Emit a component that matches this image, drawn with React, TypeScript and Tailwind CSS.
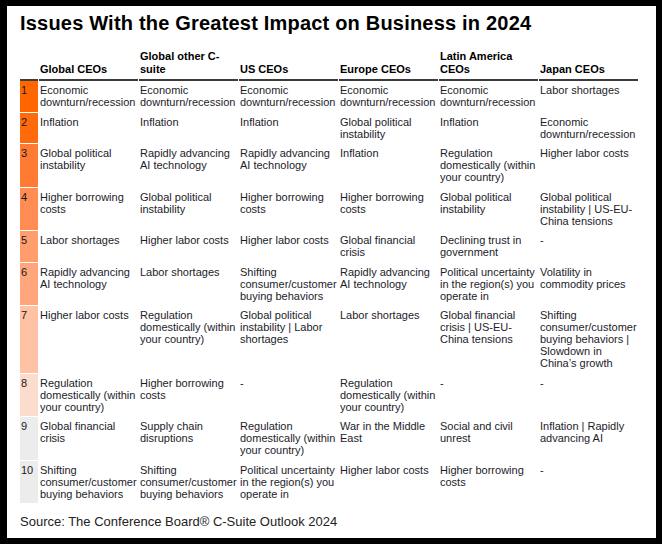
import React from "react";

const cols = [
  ["Global CEOs"],
  ["Global other C-", "suite"],
  ["US CEOs"],
  ["Europe CEOs"],
  ["Latin America", "CEOs"],
  ["Japan CEOs"],
];

const ED = ["Economic", "downturn/recession"];
const GPI = ["Global political", "instability"];
const RAA = ["Rapidly advancing", "AI technology"];
const HBC = ["Higher borrowing", "costs"];
const REG = ["Regulation", "domestically (within", "your country)"];
const SCB = ["Shifting", "consumer/customer", "buying behaviors"];
const PU = ["Political uncertainty", "in the region(s) you", "operate in"];

const rows: string[][][] = [
  [ED, ED, ED, ED, ED, ["Labor shortages"]],
  [["Inflation"], ["Inflation"], ["Inflation"], GPI, ["Inflation"], ED],
  [GPI, RAA, RAA, ["Inflation"], REG, ["Higher labor costs"]],
  [HBC, GPI, HBC, HBC, GPI, ["Global political", "instability | US-EU-", "China tensions"]],
  [
    ["Labor shortages"],
    ["Higher labor costs"],
    ["Higher labor costs"],
    ["Global financial", "crisis"],
    ["Declining trust in", "government"],
    ["-"],
  ],
  [RAA, ["Labor shortages"], SCB, RAA, PU, ["Volatility in", "commodity prices"]],
  [
    ["Higher labor costs"],
    REG,
    ["Global political", "instability | Labor", "shortages"],
    ["Labor shortages"],
    ["Global financial", "crisis | US-EU-", "China tensions"],
    ["Shifting", "consumer/customer", "buying behaviors |", "Slowdown in", "China\u2019s growth"],
  ],
  [REG, HBC, ["-"], REG, ["-"], ["-"]],
  [
    ["Global financial", "crisis"],
    ["Supply chain", "disruptions"],
    REG,
    ["War in the Middle", "East"],
    ["Social and civil", "unrest"],
    ["Inflation | Rapidly", "advancing AI"],
  ],
  [SCB, SCB, PU, ["Higher labor costs"], HBC, ["-"]],
];

const rankBg = [
  "bg-[#ff6600]",
  "bg-[#ff6a0c]",
  "bg-[#ff7a33]",
  "bg-[#ff8c52]",
  "bg-[#ff9d6c]",
  "bg-[#ffa67d]",
  "bg-[#ffc2a4]",
  "bg-[#fcdccd]",
  "bg-[#ececec]",
  "bg-[#ececec]",
];

function Lines({ lines }: { lines: string[] }) {
  return (
    <>
      {lines.map((l, i) => (
        <div key={i} className="whitespace-nowrap">
          {l}
        </div>
      ))}
    </>
  );
}

export default function App() {
  return (
    <div
      className="w-[662px] h-[544px] bg-black pl-[7px] pt-[6px] pr-[6px] pb-[6px]"
      style={{ fontFamily: '"Liberation Sans", Arial, sans-serif' }}
    >
      <div className="w-full h-full bg-white pl-[13px] pt-[5px]">
        <h1 className="text-[20px] leading-[24px] font-bold text-black tracking-[0.2px]">
          Issues With the Greatest Impact on Business in 2024
        </h1>

        <div className="mt-[15px] grid grid-cols-[18px_repeat(6,99px)] gap-x-px w-[618px]">
          <div className="border-b-2 border-[#3c3c3c]" />
          {cols.map((c, i) => (
            <div
              key={i}
              className="border-b-2 border-[#3c3c3c] pb-[3px] pl-px flex flex-col justify-end text-[11px] leading-[13px] font-bold text-black"
            >
              <Lines lines={c} />
            </div>
          ))}
        </div>

        <div className="grid grid-cols-[18px_repeat(6,99px)] gap-x-px gap-y-px w-[618px] text-[11px] leading-[12px] text-[#1c1c2a]">
          {rows.map((r, ri) => (
            <React.Fragment key={ri}>
              <div className={`${rankBg[ri]} pt-[3px] pb-[3.5px] pl-px text-[#1a1a1a]`}>
                {ri + 1}
              </div>
              {r.map((cell, ci) => (
                <div key={ci} className="pt-[3px] pb-[3.5px] pl-px">
                  <Lines lines={cell} />
                </div>
              ))}
            </React.Fragment>
          ))}
        </div>

        <p className="mt-[11px] text-[13px] leading-[16px] text-[#222]">
          Source: The Conference Board® C-Suite Outlook 2024
        </p>
      </div>
    </div>
  );
}
